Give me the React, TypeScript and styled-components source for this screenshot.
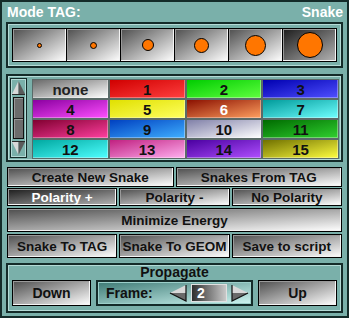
import styled, { createGlobalStyle, css } from "styled-components";

const teal = "#7ab0aa";
const dark = "#142b29";

const GlobalStyle = createGlobalStyle`
  html, body { margin: 0; padding: 0; background: ${teal}; }
  * { box-sizing: border-box; }
`;

const Window = styled.div`
  width: 349px;
  height: 318px;
  background: ${teal};
  border: 2px solid ${dark};
  padding: 0 4px;
  display: flex;
  flex-direction: column;
  font-family: "Liberation Sans", Arial, sans-serif;
  font-weight: bold;
  overflow: hidden;
`;

const Header = styled.div`
  height: 20px;
  display: flex;
  justify-content: space-between;
  align-items: center;
  padding: 0 0 1px 1px;
  color: #fff;
  font-size: 14px;
`;

const Panel = styled.div<{ $mt?: number }>`
  margin-top: ${({ $mt = 0 }) => $mt}px;
  border: 2px solid ${dark};
  box-shadow: inset 0 0 0 1px #b4dad6;
`;

const SizePanel = styled(Panel)`
  height: 46px;
  padding: 4px;
`;

const SizeRow = styled.div`
  display: grid;
  grid-template-columns: repeat(6, 1fr);
  height: 100%;
  border: 1px solid #000;
  background: #000;
  gap: 1px;
`;

const bevel = css<{ $on?: boolean }>`
  background: ${({ $on }) =>
    $on
      ? "linear-gradient(to bottom right, #1c1c1c, #b4b4b4)"
      : "linear-gradient(to bottom right, #4e4e4e, #ffffff)"};
  box-shadow: inset -1px -1px 0 #f4f4f4, inset 1px 1px 0 #9a9a9a;
`;

const SizeButton = styled.div<{ $on?: boolean }>`
  ${bevel};
  display: flex;
  align-items: center;
  justify-content: center;
`;

const Dot = styled.div<{ $d: number }>`
  width: ${({ $d }) => $d}px;
  height: ${({ $d }) => $d}px;
  border-radius: 50%;
  background: #ff7600;
  border: 1px solid #000;
`;

const ColorPanel = styled(Panel)`
  height: 88px;
  padding: 2px 2px 2px 2px;
  display: flex;
  gap: 5px;
`;

const Scroll = styled.div`
  width: 17px;
  border: 1px solid ${dark};
  box-shadow: inset 0 0 0 1px #b4dad6;
  display: flex;
  flex-direction: column;
  align-items: center;
  padding: 2px 0;
`;

const Thumb = styled.div`
  flex: 1;
  width: 11px;
  margin: 2px 0;
  border: 1px solid #111;
  background: #6c6c6c;
  display: flex;
  flex-direction: column;
`;

const ThumbHalf = styled.div`
  flex: 1;
  border-bottom: 1px solid #222;
  box-shadow: inset 1px 1px 0 #9a9a9a;
  &:last-child { border-bottom: none; }
`;

const ColorGrid = styled.div`
  flex: 1;
  margin-top: 1px;
  display: grid;
  grid-template-columns: repeat(4, 1fr);
  grid-template-rows: repeat(4, 20px);
`;

const Swatch = styled.div<{ $from: string; $to: string; $fg: string }>`
  display: flex;
  align-items: center;
  justify-content: center;
  font-size: 15px;
  color: ${({ $fg }) => $fg};
  background: linear-gradient(to bottom right, ${({ $from }) => $from}, ${({ $to }) => $to});
  border: 1px solid #5a6a68;
  box-shadow: inset -1px -1px 0 rgba(255, 255, 255, 0.35);
`;

const Actions = styled.div`
  margin: 5px 1px 0;
  display: flex;
  flex-direction: column;
  gap: 1px;
`;

const ActionRow = styled.div<{ $h: number; $mt?: number }>`
  height: ${({ $h }) => $h}px;
  margin-top: ${({ $mt = 0 }) => $mt}px;
  display: flex;
  gap: 2px;
`;

const Button = styled.div<{ $on?: boolean }>`
  ${bevel};
  flex: 1;
  display: flex;
  align-items: center;
  justify-content: center;
  border: 1px solid #000;
  font-size: 13.5px;
  color: ${({ $on }) => ($on ? "#fff" : "#111")};
  white-space: nowrap;
`;

const PropPanel = styled(Panel)`
  height: 50px;
  padding: 0 4px 5px;
  display: flex;
  flex-direction: column;
`;

const PropTitle = styled.div`
  height: 15px;
  line-height: 15px;
  text-align: center;
  font-size: 14px;
  color: #111;
`;

const PropRow = styled.div`
  flex: 1;
  display: flex;
  gap: 5px;
`;

const SideButton = styled(Button)`
  flex: 0 0 79px;
  font-size: 14px;
`;

const FrameBox = styled.div`
  flex: 1;
  border: 2px solid ${dark};
  background: linear-gradient(to bottom right, #3e7a75, #cff6f2);
  box-shadow: inset 0 0 0 1px #9ccfca;
  display: flex;
  align-items: center;
  padding: 0 2px 0 8px;
  font-size: 14px;
  color: #111;
`;

const FrameLabel = styled.span`
  flex: 1;
`;

const FrameValue = styled.div`
  width: 36px;
  height: 18px;
  margin: 0 4px;
  border: 1px solid #e0e0e0;
  background: linear-gradient(to right, #2e2e2e, #c8c8c8);
  color: #fff;
  font-size: 14px;
  line-height: 16px;
  padding-left: 5px;
`;

const sizes = [5, 7, 12, 15, 21, 26];

const swatches: [string, string, string, string][] = [
  ["none", "#6a6a6a", "#ffffff", "#222"],
  ["1", "#d00000", "#ff4040", "#111"],
  ["2", "#00cc00", "#60ff40", "#111"],
  ["3", "#0000b0", "#5050ff", "#111"],
  ["4", "#8a00a0", "#ff50ff", "#111"],
  ["5", "#e0e000", "#ffff60", "#111"],
  ["6", "#8a1000", "#ffa060", "#fff"],
  ["7", "#009a9a", "#70ffff", "#111"],
  ["8", "#800030", "#ff40a0", "#111"],
  ["9", "#0040c0", "#40b0ff", "#111"],
  ["10", "#8080a8", "#ffffff", "#111"],
  ["11", "#006a00", "#30d030", "#111"],
  ["12", "#00a8a0", "#50ffff", "#111"],
  ["13", "#c02080", "#ffb0f0", "#111"],
  ["14", "#4a00a0", "#b050ff", "#111"],
  ["15", "#707000", "#ffff40", "#111"],
];

const VArrow = ({ down }: { down?: boolean }) => (
  <svg width="13" height="14" viewBox="0 0 13 14" style={down ? { transform: "scaleY(-1)" } : undefined}>
    <polygon points="6.5,0 0,13 6.5,13" fill="#d8d8d8" />
    <polygon points="6.5,0 13,13 6.5,13" fill="#5a5a5a" />
    <polygon points="0,13 13,13 13,14 0,14" fill="#2a2a2a" />
  </svg>
);

const HArrow = ({ right }: { right?: boolean }) => (
  <svg width="18" height="18" viewBox="0 0 18 18" style={right ? { transform: "scaleX(-1)" } : undefined}>
    <polygon points="1,9 17,1 17,9" fill="#d8d8d8" />
    <polygon points="1,9 17,9 17,17" fill="#6a6a6a" />
    <polyline points="1,9 17,17 17,1" fill="none" stroke="#111" strokeWidth="1.2" />
  </svg>
);

export default function App() {
  return (
    <>
      <GlobalStyle />
      <Window>
        <Header>
          <span>Mode TAG:</span>
          <span>Snake</span>
        </Header>

        <SizePanel>
          <SizeRow>
            {sizes.map((d, i) => (
              <SizeButton key={d} $on={i === sizes.length - 1}>
                <Dot $d={d} />
              </SizeButton>
            ))}
          </SizeRow>
        </SizePanel>

        <ColorPanel $mt={6}>
          <Scroll>
            <VArrow />
            <Thumb>
              <ThumbHalf />
              <ThumbHalf />
            </Thumb>
            <VArrow down />
          </Scroll>
          <ColorGrid>
            {swatches.map(([label, from, to, fg]) => (
              <Swatch key={label} $from={from} $to={to} $fg={fg}>
                {label}
              </Swatch>
            ))}
          </ColorGrid>
        </ColorPanel>

        <Actions>
          <ActionRow $h={20}>
            <Button>Create New Snake</Button>
            <Button>Snakes From TAG</Button>
          </ActionRow>
          <ActionRow $h={18}>
            <Button $on>Polarity +</Button>
            <Button>Polarity -</Button>
            <Button>No Polarity</Button>
          </ActionRow>
          <ActionRow $h={24} $mt={1}>
            <Button>Minimize Energy</Button>
          </ActionRow>
          <ActionRow $h={24} $mt={1}>
            <Button>Snake To TAG</Button>
            <Button>Snake To GEOM</Button>
            <Button>Save to script</Button>
          </ActionRow>
        </Actions>

        <PropPanel $mt={5}>
          <PropTitle>Propagate</PropTitle>
          <PropRow>
            <SideButton>Down</SideButton>
            <FrameBox>
              <FrameLabel>Frame:</FrameLabel>
              <HArrow />
              <FrameValue>2</FrameValue>
              <HArrow right />
            </FrameBox>
            <SideButton>Up</SideButton>
          </PropRow>
        </PropPanel>
      </Window>
    </>
  );
}
